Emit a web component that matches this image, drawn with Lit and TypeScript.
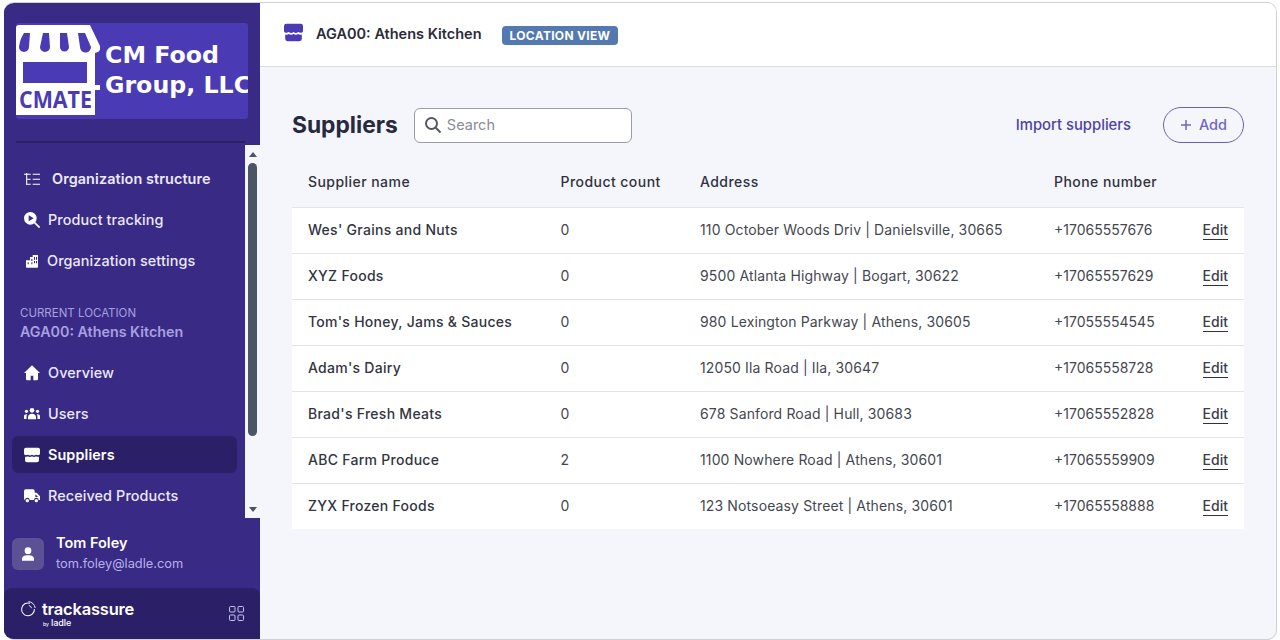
import { LitElement, html, css, svg } from "lit";
import { customElement } from "lit/decorators.js";

const rows = [
  ["Wes' Grains and Nuts", "0", "110 October Woods Driv | Danielsville, 30665", "+17065557676"],
  ["XYZ Foods", "0", "9500 Atlanta Highway | Bogart, 30622", "+17065557629"],
  ["Tom's Honey, Jams & Sauces", "0", "980 Lexington Parkway | Athens, 30605", "+17055554545"],
  ["Adam's Dairy", "0", "12050 Ila Road | Ila, 30647", "+17065558728"],
  ["Brad's Fresh Meats", "0", "678 Sanford Road | Hull, 30683", "+17065552828"],
  ["ABC Farm Produce", "2", "1100 Nowhere Road | Athens, 30601", "+17065559909"],
  ["ZYX Frozen Foods", "0", "123 Notsoeasy Street | Athens, 30601", "+17065558888"],
];

const store = svg`<path d="M3 1h18a3 3 0 0 1 3 3v6c0 2-3 3-6 1.500-2 1.500-4 1.500-6 0-2 1.500-4 1.500-6 0C3 13 0 12 0 10V4a3 3 0 0 1 3-3z"/><path d="M1.500 14.500c1.800.5 3.300.3 4.500-.5 2 1.300 4 1.300 6 0 2 1.300 4 1.300 6 0 1.200.8 2.700 1 4.500.5V20a3 3 0 0 1-3 3H4.500a3 3 0 0 1-3-3z"/>`;

const icons = {
  org: svg`<path d="M4 3v18M0 5h10M4 12.500h6M4 20h6M13 5h11M13 12.500h11M13 20h11" fill="none" stroke="currentColor" stroke-width="1.600"/>`,
  track: svg`<path fill-rule="evenodd" d="M9.500 0a9.500 9.500 0 1 1 0 19 9.500 9.500 0 0 1 0-19zM7 5v9l7.500-4.500z"/><path d="M15.500 15.500l8 8" stroke="currentColor" stroke-width="2.400" fill="none"/>`,
  settings: svg`<path fill-rule="evenodd" d="M3 11h6V6h4V3h8v18a1 1 0 0 1-1 1H4a1 1 0 0 1-1-1zM15 6v4h1.600V6zm3 0v4h1.600V6zm-7 3v3h1.600V9zm4 3v3.500h1.600V12zm3 0v3.500h1.600V12zM5.500 14v3h1.600v-3zm5.500 0v3h1.600v-3z"/>`,
  home: svg`<path fill-rule="evenodd" d="M12 .5L24 12h-3v9a2 2 0 0 1-2 2H5a2 2 0 0 1-2-2v-9H0zM10 16v7h4v-7z"/>`,
  users: svg`<circle cx="12" cy="6.500" r="3.500"/><circle cx="3.700" cy="8" r="2.400"/><circle cx="20.300" cy="8" r="2.400"/><path d="M6 20v-3.500c0-3 2.500-5 6-5s6 2 6 5V20z"/><path d="M0 19.500V15.500c0-2 1.500-3.200 4.800-3a7 7 0 0 0-1 4v3zM24 19.500V15.500c0-2-1.500-3.200-4.800-3a7 7 0 0 1 1 4v3z"/>`,
  store,
  truck: svg`<path fill-rule="evenodd" d="M0 4.500a2.500 2.500 0 0 1 2.500-2.500h11a2.500 2.500 0 0 1 2.500 2.500V7h3l5 5.500V18h-2a3.500 3.500 0 0 0-7 0H8.500a3.500 3.500 0 0 0-7 0H2a2 2 0 0 1-2-2zM17 10v3.500h4L18 10z"/><circle cx="5" cy="19" r="2.500"/><circle cx="18.500" cy="19" r="2.500"/>`,
};

const nav1 = [
  { icon: "org", label: "Organization structure", bold: true, gap: 12 },
  { icon: "track", label: "Product tracking", gap: 8 },
  { icon: "settings", label: "Organization settings", gap: 7 },
];
const nav2 = [
  { icon: "home", label: "Overview", gap: 8 },
  { icon: "users", label: "Users", gap: 8 },
  { icon: "store", label: "Suppliers", active: true, gap: 8 },
  { icon: "truck", label: "Received Products", gap: 8 },
];

@customElement("app-root")
export class AppRoot extends LitElement {
  static styles = css`
    :host {
      display: block;
      width: 1280px;
      height: 640px;
      background: #fff;
      font-family: "Inter", "Liberation Sans", sans-serif;
      overflow: hidden;
    }
    * { box-sizing: border-box; }
    .window {
      margin: 2px 3px 0 4px;
      height: 638px;
      border: 1px solid #cfd1d6;
      border-left: none;
      border-radius: 10px;
      display: flex;
      overflow: hidden;
      background: #f5f6fb;
    }
    .side {
      width: 256px;
      flex: none;
      background: #382a85;
      display: flex;
      flex-direction: column;
      color: #f3f1fb;
    }
    .logoWrap { padding: 20px 12px 0 12px; height: 142px; flex: none; }
    .logo {
      height: 96px;
      background: #4a3bb5;
      border-radius: 3px;
      display: flex;
      overflow: hidden;
    }
    .rule {
      height: 2px;
      width: 229px;
      margin-top: 22px;
      background: #2b2068;
    }
    .mark {
      width: 84px;
      height: 96px;
      flex: none;
      display: block;
    }
    .brand {
      font-family: "DejaVu Sans", sans-serif;
      font-weight: 700;
      font-size: 23.700px;
      line-height: 30px;
      color: #fff;
      white-space: nowrap;
      margin: 17px 0 0 5px;
    }
    .scrollArea {
      height: 373px;
      flex: none;
      display: flex;
    }
    .navCol {
      width: 241px;
      flex: none;
      background: #382a85;
      padding: 0 8px;
    }
    .scrollbar {
      width: 15px;
      flex: none;
      background: #f5f6fb;
      display: flex;
      flex-direction: column;
      align-items: center;
    }
    .arrowUp {
      width: 0; height: 0;
      border-left: 4.500px solid transparent;
      border-right: 4.500px solid transparent;
      border-bottom: 5px solid #4b5360;
      margin-top: 7px;
    }
    .thumb {
      width: 9px;
      height: 273px;
      margin-top: 6px;
      background: #4b5563;
      border-radius: 5px;
    }
    .arrowDown {
      width: 0; height: 0;
      border-left: 4.500px solid transparent;
      border-right: 4.500px solid transparent;
      border-top: 5px solid #4b5360;
      margin-top: auto;
      margin-bottom: 6px;
    }
    .group1 { padding-top: 15px; }
    .item {
      height: 37px;
      margin-bottom: 4px;
      display: flex;
      align-items: center;
      padding-left: 12px;
      border-radius: 6px;
      font-size: 14.400px;
      font-weight: 500;
      letter-spacing: 0.1px;
      color: #ece9fa;
      white-space: nowrap;
    }
    .item.bold { font-weight: 600; }
    .item.active { background: #2b2068; font-weight: 600; color: #fff; }
    .item svg { width: 16px; height: 16px; fill: #fff; color: #fff; flex: none; }
    .locLabel {
      margin: 26px 0 0 8px;
      font-size: 11.500px;
      line-height: 16px;
      color: #a8a0e0;
    }
    .locName {
      margin: 2px 0 13px 8px;
      font-size: 14.300px;
      line-height: 18px;
      font-weight: 600;
      color: #a8a0e0;
    }
    .user {
      height: 70px;
      flex: none;
      display: flex;
      align-items: center;
      padding: 2px 8px 0;
      gap: 12px;
    }
    .avatar {
      width: 32px;
      height: 32px;
      border-radius: 6px;
      background: #5d5196;
      display: flex;
      align-items: center;
      justify-content: center;
    }
    .avatar svg { width: 18px; height: 18px; fill: #fff; }
    .uname { font-size: 14.500px; font-weight: 600; color: #fff; line-height: 18px; margin-top: -2px; }
    .umail { font-size: 12.800px; color: #b7b0e8; line-height: 18px; margin-top: 3px; }
    .foot {
      flex: 1;
      background: #2b2068;
      border-radius: 8px 8px 0 0;
      display: flex;
      align-items: center;
      padding: 0 16px;
      justify-content: space-between;
    }
    .ta { display: flex; align-items: flex-start; gap: 6px; }
    .ta svg { width: 16px; height: 16px; margin-top: 2px; }
    .taName { font-size: 16.500px; font-weight: 600; color: #fff; line-height: 20px; letter-spacing: -0.2px; }
    .taBy { font-size: 9px; font-weight: 500; color: #fff; line-height: 10px; margin: -1px 0 0 1px; }
    .taBy small { font-size: 5px; margin-right: 2px; }
    .grid { width: 15px; height: 15px; display: block; }

    .main { flex: 1; min-width: 0; display: flex; flex-direction: column; }
    .top {
      height: 64px;
      flex: none;
      background: #fff;
      border-bottom: 1px solid #dcdde2;
      display: flex;
      align-items: flex-start;
      padding: 20px 0 0 24px;
    }
    .top svg { width: 19px; height: 19px; fill: #4a3bb5; flex: none; }
    .topName {
      margin-left: 13px;
      font-size: 14.500px;
      font-weight: 600;
      line-height: 22px;
      color: #2b2b3a;
      white-space: nowrap;
    }
    .badge {
      margin: 3px 0 0 20px;
      height: 19px;
      padding: 0 8px;
      background: #5379ae;
      color: #fff;
      border-radius: 4px;
      font-size: 12px;
      font-weight: 700;
      letter-spacing: 0.3px;
      line-height: 19px;
      white-space: nowrap;
    }
    .content { flex: 1; padding: 40px 32px 0 32px; }
    .bar { display: flex; align-items: center; height: 36px; }
    h1 {
      margin: 0;
      font-size: 22.800px;
      font-weight: 700;
      color: #272a3f;
      line-height: 36px;
    }
    .search {
      margin-left: 16px;
      width: 218px;
      height: 35px;
      background: #fff;
      border: 1px solid #9a9ca6;
      border-radius: 6px;
      display: flex;
      align-items: center;
      padding-left: 9px;
      gap: 5px;
      font-size: 14.500px;
      color: #8a8c98;
    }
    .search span { padding-bottom: 2px; }
    .search svg { width: 18px; height: 18px; fill: none; stroke: #55585f; stroke-width: 2; }
    .import {
      margin-left: auto;
      font-size: 14.800px;
      font-weight: 500;
      color: #4e43a5;
      padding-bottom: 1px;
    }
    .add {
      margin-left: 32px;
      width: 81px;
      height: 36px;
      border: 1px solid #6a5fc0;
      border-radius: 18px;
      display: flex;
      align-items: center;
      justify-content: center;
      gap: 7px;
      font-size: 14.500px;
      font-weight: 500;
      color: #6f65c4;
    }
    .add span { padding-bottom: 1px; }
    .add svg { width: 12px; height: 12px; stroke: #6f65c4; stroke-width: 1.500; fill: none; }
    .table { margin-top: 14px; }
    .row {
      display: grid;
      grid-template-columns: 252.500px 139.500px 354px 148px 1fr;
      height: 46px;
      align-items: center;
      padding: 0 0 2px 16px;
      background: #fff;
      border-top: 1px solid #e3e4e8;
      font-size: 14px;
      color: #454750;
      white-space: nowrap;
    }
    .row.head {
      background: transparent;
      border-top: none;
      height: 50px;
      font-weight: 500;
      color: #30323d;
      font-size: 14px;
      letter-spacing: 0.45px;
    }
    .row .name { font-weight: 500; color: #33353f; letter-spacing: 0.28px; }
    .addr { letter-spacing: 0.13px; }
    .edit {
      font-weight: 500;
      color: #3c3e4a;
      border-bottom: 1px solid #30323d;
      justify-self: end;
      margin: 2px 16px 0 0;
      line-height: 18px;
    }
  `;

  private navItem(n: any) {
    return html`<div class="item ${n.bold ? "bold" : ""} ${n.active ? "active" : ""}">
      <svg viewBox="0 0 24 24">${(icons as any)[n.icon]}</svg>
      <span style="margin-left:${n.gap}px">${n.label}</span>
    </div>`;
  }

  render() {
    return html`<div class="window">
      <aside class="side">
        <div class="logoWrap">
          <div class="logo">
            <svg class="mark" viewBox="0 0 84 96">
              <path d="M3 2h71l10 21q1 4-2 6l-3 1v32h5v5h-5v25H0V5q0-3 3-3z" fill="#fff"/>
              <path d="M8 10h6l-1 14a5 5 0 0 1-10 0q1-8 5-14zM27 10h6l1 14a5 5 0 0 1-10 0zM44 10h7l2 14a4.500 4.500 0 0 1-9 0zM62 10h7l6 14a5.500 5.500 0 0 1-11 0z" fill="#4a3bb5"/>
              <rect x="7" y="39" width="64" height="21" fill="#4a3bb5"/>
              <text x="3" y="85" font-family="'Open Sans','Liberation Sans',sans-serif" font-weight="700" font-size="23" textLength="73" lengthAdjust="spacingAndGlyphs" fill="#4a3bb5">CMATE</text>
            </svg>
            <div class="brand">CM Food<br />Group, LLC</div>
          </div>
          <div class="rule"></div>
        </div>
        <div class="scrollArea">
          <div class="navCol">
            <div class="group1">${nav1.map((n) => this.navItem(n))}</div>
            <div class="locLabel">CURRENT LOCATION</div>
            <div class="locName">AGA00: Athens Kitchen</div>
            ${nav2.map((n) => this.navItem(n))}
          </div>
          <div class="scrollbar">
            <div class="arrowUp"></div>
            <div class="thumb"></div>
            <div class="arrowDown"></div>
          </div>
        </div>
        <div class="user">
          <div class="avatar">
            <svg viewBox="0 0 24 24"><circle cx="12" cy="7.500" r="4.500"/><path d="M4 21v-2.500c0-3 2.500-5 8-5s8 2 8 5V21z"/></svg>
          </div>
          <div>
            <div class="uname">Tom Foley</div>
            <div class="umail">tom.foley@ladle.com</div>
          </div>
        </div>
        <div class="foot">
          <div class="ta">
            <svg viewBox="0 0 20 20" fill="none" stroke="#fff">
              <path d="M12.500 2.800A8 8 0 1 0 18 10" stroke-width="1.300"/><path d="M10.500 .8a9 9 0 0 1 8.500 8M11 5.500a5 5 0 0 1 3.500 3.500" stroke-width="1.100"/>
            </svg>
            <div>
              <div class="taName">trackassure</div>
              <div class="taBy"><small>by</small>ladle</div>
            </div>
          </div>
          <svg class="grid" viewBox="0 0 15 15" fill="none" stroke="#c9c4ee" stroke-width="1">
            <rect x=".5" y=".5" width="5.500" height="5.500" rx="1"/><rect x="9" y=".5" width="5.500" height="5.500" rx="1"/>
            <rect x=".5" y="9" width="5.500" height="5.500" rx="1"/><rect x="9" y="9" width="5.500" height="5.500" rx="1"/>
          </svg>
        </div>
      </aside>
      <main class="main">
        <header class="top">
          <svg viewBox="0 0 24 24">${store}</svg>
          <div class="topName">AGA00: Athens Kitchen</div>
          <div class="badge">LOCATION VIEW</div>
        </header>
        <section class="content">
          <div class="bar">
            <h1>Suppliers</h1>
            <div class="search">
              <svg viewBox="0 0 18 18"><circle cx="7.500" cy="7.500" r="5.500"/><path d="M11.500 11.500l5 5"/></svg>
              <span>Search</span>
            </div>
            <div class="import">Import suppliers</div>
            <div class="add">
              <svg viewBox="0 0 12 12"><path d="M6 1v10M1 6h10"/></svg>
              <span>Add</span>
            </div>
          </div>
          <div class="table">
            <div class="row head">
              <div>Supplier name</div><div>Product count</div><div>Address</div><div>Phone number</div><div></div>
            </div>
            ${rows.map(
              (r) => html`<div class="row">
                <div class="name">${r[0]}</div><div>${r[1]}</div><div class="addr">${r[2]}</div><div>${r[3]}</div>
                <div class="edit">Edit</div>
              </div>`
            )}
          </div>
        </section>
      </main>
    </div>`;
  }
}
